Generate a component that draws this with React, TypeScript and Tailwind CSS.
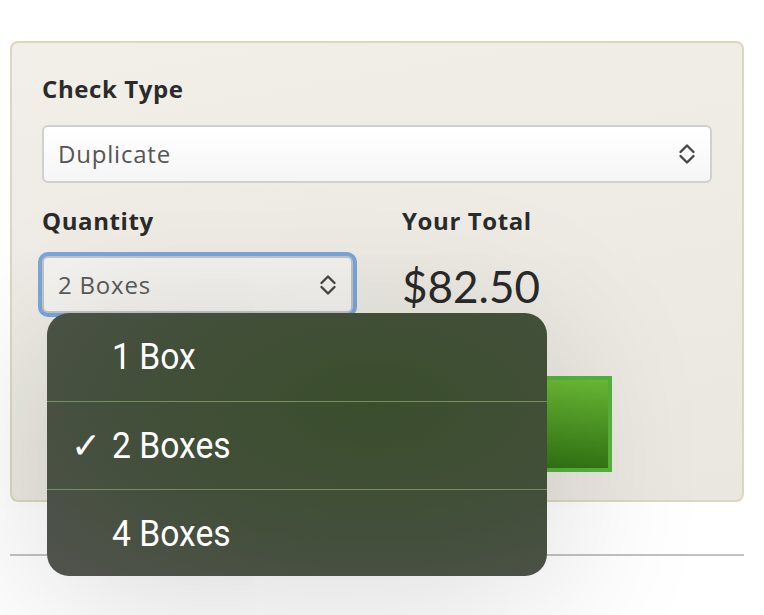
import React from "react";

const Chevrons: React.FC = () => (
  <svg width="18" height="22" viewBox="0 0 18 22" fill="none" className="shrink-0">
    <path d="M2.5 9 L9 2.5 L15.5 9" stroke="#474747" strokeWidth="2.4" strokeLinecap="round" strokeLinejoin="round" />
    <path d="M2.5 13 L9 19.5 L15.5 13" stroke="#474747" strokeWidth="2.4" strokeLinecap="round" strokeLinejoin="round" />
  </svg>
);

const options = [
  { label: "1 Box", checked: false },
  { label: "2 Boxes", checked: true },
  { label: "4 Boxes", checked: false },
];

const App: React.FC = () => (
  <div className="relative min-h-[615px] w-[764px] overflow-hidden bg-white pt-[41px] pl-[10px] font-['Open_Sans','Lato',sans-serif]">
    <div className="w-[734px] h-[461px] rounded-lg border-2 border-[#dcd7bf] bg-[linear-gradient(170deg,#f1efe8,#e9e7df)] px-[30px] pt-[32px]">
      <div className="h-[28px] text-[24px] leading-[28px] font-bold tracking-[0.6px] text-[#2b2b2b]">Check Type</div>
      <div className="mt-[22px] h-[58px] flex items-center justify-between rounded-md border-2 border-[#d0d0d0] bg-[linear-gradient(to_bottom,#ffffff,#f6f6f6)] pl-[14px] pr-[14px]">
        <span className="text-[24px] tracking-[0.8px] text-[#555555]">Duplicate</span>
        <Chevrons />
      </div>
      <div className="mt-[24px] grid grid-cols-[311px_1fr] gap-x-[49px]">
        <div>
          <div className="h-[28px] text-[24px] leading-[28px] font-bold tracking-[0.6px] text-[#2b2b2b]">Quantity</div>
          <div className="mt-[21px] h-[57px] flex items-center justify-between rounded-md border-2 border-[#c4c4c4] bg-[#f4f3ef] pl-[14px] pr-[14px] ring-4 ring-[#7aa6dc]">
            <span className="text-[24px] tracking-[0.8px] text-[#5a5a5a]">2 Boxes</span>
            <Chevrons />
          </div>
        </div>
        <div>
          <div className="h-[28px] text-[24px] leading-[28px] font-bold tracking-[0.6px] text-[#2b2b2b]">Your Total</div>
          <div className="mt-[25px] h-[52px] flex items-center font-['Lato',sans-serif] text-[44px] text-[#2a2a2a]">$82.50</div>
          <div className="mt-[64px] w-[210px] h-[96px] border-4 border-[#55b33b] bg-[linear-gradient(to_bottom,#6abb36,#337614)]" />
        </div>
      </div>
    </div>
    <div className="mt-[52px] w-[734px] h-[2px] bg-[#c2c2c2]" />

    <div className="absolute left-[47px] top-[313px] w-[500px] h-[263px] rounded-[22px] overflow-hidden bg-[radial-gradient(ellipse_at_65%_35%,#3a4e2c_0%,#434f3b_55%,#51534e_100%)] shadow-[0_20px_160px_rgba(0,0,0,0.16)] text-white font-['Roboto',sans-serif]">
      {options.map((o, i) => (
        <div key={o.label} className={"h-[88px] flex items-center relative " + (i > 0 ? "border-t border-[#748e62]" : "")}>
          {o.checked && <span className="absolute left-[24px] text-[36px]">✓</span>}
          <span className="ml-[65px] inline-block origin-left scale-x-[0.91] text-[37px]">{o.label}</span>
        </div>
      ))}
    </div>
  </div>
);

export default App;
